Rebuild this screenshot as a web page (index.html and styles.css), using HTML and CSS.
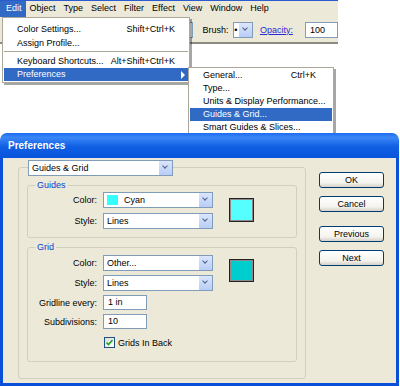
FILE: index.html
```html
<!doctype html>
<html>
<head>
<meta charset="utf-8">
<title>Preferences - Guides &amp; Grid</title>
<link rel="stylesheet" href="styles.css">
</head>
<body>
<div id="shot">
  <div id="app">
    <ul class="menubar">
      <li class="open">Edit</li>
      <li>Object</li>
      <li>Type</li>
      <li>Select</li>
      <li>Filter</li>
      <li>Effect</li>
      <li>View</li>
      <li>Window</li>
      <li>Help</li>
    </ul>
    <div class="toolbar">
      <span class="combo combo-style"><span class="drop"></span></span>
      <span class="tlabel">Brush:</span>
      <span class="combo combo-brush"><span class="val">&bull;</span><span class="drop"></span></span>
      <span class="tlabel link">Opacity:</span>
      <span class="tfield">100</span>
    </div>
  </div>

  <ul class="menu edit-menu">
    <li><span>Color Settings...</span><span>Shift+Ctrl+K</span></li>
    <li><span>Assign Profile...</span></li>
    <li class="sep"></li>
    <li><span>Keyboard Shortcuts...</span><span>Alt+Shift+Ctrl+K</span></li>
    <li class="hot has-sub"><span>Preferences</span><span class="sub-arrow"></span></li>
  </ul>

  <ul class="menu pref-menu">
    <li><span>General...</span><span>Ctrl+K</span></li>
    <li><span>Type...</span></li>
    <li><span>Units &amp; Display Performance...</span></li>
    <li class="hot"><span>Guides &amp; Grid...</span></li>
    <li><span>Smart Guides &amp; Slices...</span></li>
  </ul>

  <div class="dialog">
    <div class="titlebar">Preferences</div>
    <div class="dlg-body">
      <div class="panel">
        <div class="select page-select"><span class="val">Guides &amp; Grid</span><span class="drop"></span></div>

        <fieldset class="group guides">
          <legend>Guides</legend>
          <div class="group-in">
            <div class="fields">
              <label>Color:</label>
              <div class="select"><span class="val"><i class="chip"></i>Cyan</span><span class="drop"></span></div>
              <label>Style:</label>
              <div class="select"><span class="val">Lines</span><span class="drop"></span></div>
            </div>
            <div class="swatch swatch-cyan"></div>
          </div>
        </fieldset>

        <fieldset class="group grid">
          <legend>Grid</legend>
          <div class="group-in">
            <div class="fields">
              <label>Color:</label>
              <div class="select"><span class="val">Other...</span><span class="drop"></span></div>
              <label>Style:</label>
              <div class="select"><span class="val">Lines</span><span class="drop"></span></div>
              <label>Gridline every:</label>
              <div class="field">1 in</div>
              <label>Subdivisions:</label>
              <div class="field">10</div>
            </div>
            <div class="swatch swatch-teal"></div>
          </div>
          <div class="check">
            <span class="box"><svg width="9" height="9" viewBox="0 0 9 9"><path d="M1.5 4.5 L3.5 6.5 L7.5 2" fill="none" stroke="#21a121" stroke-width="1.6"/></svg></span>
            <span>Grids In Back</span>
          </div>
        </fieldset>
      </div>

      <div class="buttons">
        <div class="btn">OK</div>
        <div class="btn">Cancel</div>
        <div class="btn prev">Previous</div>
        <div class="btn">Next</div>
      </div>
    </div>
  </div>
</div>
</body>
</html>
```

FILE: styles.css
```css
html, body { margin:0; padding:0; }
body {
  width:400px; height:386px; overflow:hidden;
  background:#fff; color:#000;
  font-family:"Liberation Sans", Arial, sans-serif;
  font-size:9px;
}
#shot { position:relative; height:386px; }

/* app window strip */
#app { width:338px; border-top:1px solid #2b5bd0; background:#ece9d8; overflow:hidden; }
.menubar { display:flex; margin:0; padding:0; list-style:none; height:16px; }
.menubar li { padding:0 4px; line-height:15px; white-space:nowrap; }
.menubar li.open { background:#316ac5; color:#fff; padding:0 4px 0 6px; }

.toolbar {
  display:flex; align-items:center; height:25px;
  padding-left:150px; border-bottom:2px solid #8c8a80; white-space:nowrap;
}
.combo { display:flex; height:16px; box-sizing:border-box; border:1px solid #7f9db9; background:#fff; }
.combo .val { flex:1; text-align:center; line-height:14px; }
.combo-style { width:53px; }
.combo-brush { width:25px; margin-left:4px; }
.tlabel { margin-left:10px; }
.tlabel.link { margin-left:7px; color:#2b2bd4; text-decoration:underline; }
.tfield {
  width:40px; height:16px; margin-left:12px; box-sizing:border-box;
  border:1px solid #7f9db9; background:#fff; padding-left:4px; line-height:14px;
}

/* XP drop button */
.drop {
  width:13px; flex:none; position:relative;
  background:linear-gradient(#dbe6fd, #b9cdf7);
  border-left:1px solid #fff;
}
.drop::after {
  content:""; position:absolute; left:4px; top:3px;
  width:3px; height:3px;
  border-right:1.5px solid #4d6185; border-bottom:1.5px solid #4d6185;
  transform:rotate(45deg);
}

/* menus */
.menu {
  position:absolute; margin:0; list-style:none; background:#fff;
  border:1px solid #aca899; box-shadow:2px 2px 0 rgba(0,0,0,.35);
  box-sizing:border-box; white-space:nowrap;
}
.menu li { height:14px; line-height:14px; padding:0 13px; display:flex; justify-content:space-between; }
.menu li.sep { height:4px; padding:0; position:relative; }
.menu li.sep::after { content:""; position:absolute; left:0; right:0; top:1px; border-top:1px solid #aca899; }
.menu li.hot { background:#316ac5; color:#fff; }
.edit-menu { top:17px; left:2px; width:188px; padding:4px 1px 1px; z-index:1; }
.edit-menu li.has-sub { height:13px; line-height:13px; padding-right:3px; }
.sub-arrow {
  align-self:center; width:0; height:0;
  border-left:4px solid #fff; border-top:4px solid transparent; border-bottom:4px solid transparent;
}
.pref-menu { top:67px; left:188px; width:146px; padding:1px 1px; z-index:1; }
.pref-menu li { height:13px; line-height:13px; padding-right:16px; }

/* dialog */
.dialog { position:relative; z-index:2; margin-top:89px; width:399px; }
.titlebar {
  height:25px; box-sizing:border-box; padding-left:8px;
  border-radius:7px 7px 0 0;
  background:linear-gradient(#1c6cf0, #3b86f7 18%, #0f5fe4 55%, #0a54dc);
  color:#fff; font-weight:bold; font-size:10px; line-height:25px;
}
.dlg-body {
  display:flex; align-items:flex-start;
  background:#ece9d8; border:3px solid #0a4fd8; border-top:0;
  padding:0 12px 4px 15px;
}
.panel {
  width:288px; box-sizing:border-box; margin-top:9px;
  border:1px solid #d0d0bf; border-radius:3px;
  padding:0 8px 16px 8px;
}
.select {
  display:flex; height:16px; box-sizing:border-box;
  border:1px solid #7f9db9; background:#fff;
}
.select .val { flex:1; line-height:14px; padding-left:3px; display:flex; align-items:center; gap:6px; }
.page-select { width:145px; margin:-8px 0 0 1px; }
.chip { display:block; width:11px; height:10px; background:#33ffff; }

.group {
  margin:4px 0 0; padding:1px 0 8px;
  border:1px solid #d0d0bf; border-radius:3px; min-width:0;
}
.group legend { margin-left:7px; padding:0 2px; color:#0046d5; line-height:11px; }
.group.grid { padding:2px 0 13px; }
.group-in { display:flex; align-items:flex-start; }
.fields {
  display:grid; grid-template-columns:69px 110px;
  column-gap:6px; row-gap:5px; align-items:center;
}
.grid .fields { row-gap:4px; }
.fields label { text-align:right; white-space:nowrap; }
.field {
  width:44px; height:15px; box-sizing:border-box;
  border:1px solid #7f9db9; background:#fff; padding-left:4px; line-height:13px;
}
.swatch {
  width:25px; height:24px; margin:6px 0 0 16px; box-sizing:border-box;
  border:1px solid #222; box-shadow:inset 0 0 0 1px #8a8a8a;
}
.swatch-cyan { background:#55feff; }
.swatch-teal { background:#00cdcd; height:23px; margin-top:4px; }

.check { display:flex; align-items:center; gap:3px; margin:8px 0 0 76px; }
.box {
  display:flex; align-items:center; justify-content:center;
  width:11px; height:11px; box-sizing:border-box;
  border:1px solid #1c5180; background:linear-gradient(135deg, #dcdcd7, #fff);
}

.buttons { display:flex; flex-direction:column; gap:8px; margin:14px 0 0 13px; }
.btn {
  width:65px; height:16px; box-sizing:border-box; text-align:center; line-height:14px;
  border:1px solid #003c74; border-radius:3px;
  background:linear-gradient(#fff, #f4f3ee 70%, #d6d0c5);
}
.btn.prev { margin-top:6px; }
```
